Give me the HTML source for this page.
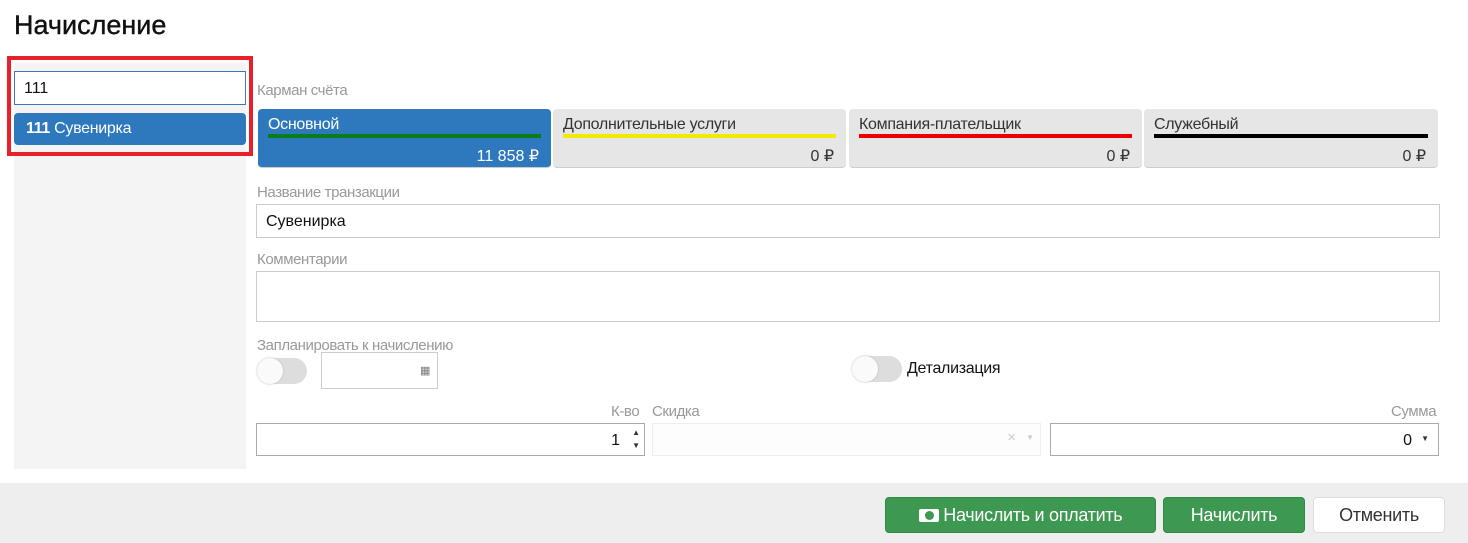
<!DOCTYPE html><html><head><meta charset="utf-8"><style>
*{box-sizing:border-box;margin:0;padding:0}
body{width:1468px;height:543px;background:#fff;font-family:"Liberation Sans",sans-serif;position:relative;overflow:hidden;color:#111}
.a{position:absolute}
.lbl{position:absolute;color:#999;font-size:15px;letter-spacing:-0.4px}
.inp{position:absolute;border:1px solid #ccc;background:#fff}
.tab{position:absolute;top:109px;height:59px;width:293px;background:#e6e6e6;border-radius:4px;border-bottom:1px solid #ccc}
.tab .t{position:absolute;left:10px;top:7px;font-size:16px;color:#333;letter-spacing:-0.3px}
.tab .l{position:absolute;left:10px;right:10px;top:25px;height:4px}
.tab .v{position:absolute;right:12px;top:37px;font-size:16px;color:#333}
.tog{position:absolute;width:50px;height:26px;border-radius:13px;background:#ddd}
.tog:after{content:"";position:absolute;left:0;top:0;width:26px;height:26px;border-radius:50%;background:#fafafa;box-shadow:0 0 2px #bbb}
.btn{position:absolute;top:497px;height:36px;border-radius:4px;font-size:18px;text-align:center;line-height:34px;letter-spacing:-0.3px}
</style></head><body>
<div class="a" style="left:14px;top:10px;font-size:27px;color:#111;-webkit-text-stroke:0.4px #111">Начисление</div>
<div class="a" style="left:14px;top:63px;width:232px;height:406px;background:#f4f4f4"></div>
<div class="a" style="left:7px;top:56px;width:246px;height:100px;border:4px solid #e8202a"></div>
<div class="inp" style="left:14px;top:71px;width:232px;height:34px;border-color:#3a7ab8;font-size:16px;padding:8px 9px">111</div>
<div class="a" style="left:14px;top:113px;width:232px;height:32px;background:#2e78bd;border-radius:4px;color:#fff;font-size:16px;padding:7px 12px;letter-spacing:-0.3px"><b>111</b> Сувенирка</div>
<div class="lbl" style="left:257px;top:82px">Карман счёта</div>
<div class="tab" style="left:258px;background:#2e78bd"><div class="t" style="color:#fff">Основной</div><div class="l" style="background:#0a7d1a"></div><div class="v" style="color:#fff">11 858 ₽</div></div>
<div class="tab" style="left:553px"><div class="t">Дополнительные услуги</div><div class="l" style="background:#f2ea00"></div><div class="v">0 ₽</div></div>
<div class="tab" style="left:849px"><div class="t">Компания-плательщик</div><div class="l" style="background:#e00"></div><div class="v">0 ₽</div></div>
<div class="tab" style="left:1144px;width:294px"><div class="t">Служебный</div><div class="l" style="background:#000"></div><div class="v">0 ₽</div></div>
<div class="lbl" style="left:257px;top:184px">Название транзакции</div>
<div class="inp" style="left:256px;top:204px;width:1184px;height:34px;font-size:16px;padding:8px 9px">Сувенирка</div>
<div class="lbl" style="left:257px;top:251px">Комментарии</div>
<div class="inp" style="left:256px;top:271px;width:1184px;height:51px"></div>
<div class="lbl" style="left:257px;top:337px">Запланировать к начислению</div>
<div class="tog" style="left:257px;top:358px"></div>
<div class="inp" style="left:321px;top:352px;width:117px;height:37px"><span class="a" style="left:98px;top:11px;font-size:11px;color:#777">▦</span></div>
<div class="tog" style="left:852px;top:356px"></div>
<div class="a" style="left:907px;top:360px;font-size:16px;letter-spacing:-0.3px">Детализация</div>
<div class="lbl" style="left:611px;top:403px">К-во</div>
<div class="lbl" style="left:652px;top:403px">Скидка</div>
<div class="lbl" style="left:1391px;top:403px">Сумма</div>
<div class="inp" style="left:256px;top:423px;width:389px;height:33px;border-color:#aaa;font-size:16px;text-align:right;padding:8px 24px">1<span class="a" style="right:4px;top:2px;font-size:8px;line-height:13px;color:#333">▲<br>▼</span></div>
<div class="inp" style="left:652px;top:423px;width:389px;height:33px;border-color:#eee;background:#fdfdfd"><span class="a" style="right:24px;top:5px;color:#ccc;font-size:15px">×</span><span class="a" style="right:6px;top:9px;color:#ccc;font-size:8px">▼</span></div>
<div class="inp" style="left:1050px;top:423px;width:389px;height:33px;border-color:#aaa;font-size:16px;text-align:right;padding:8px 26px">0<span class="a" style="right:9px;top:10px;font-size:8px;color:#333">▼</span></div>
<div class="a" style="left:0;top:483px;width:1468px;height:60px;background:#eee"></div>
<div class="btn" style="left:885px;width:271px;background:#3d9951;border:1px solid #2f8a43;color:#fff"><span style="display:inline-block;width:20px;height:13px;background:#fff;border-radius:2px;vertical-align:-1px;position:relative"><span style="position:absolute;left:6px;top:2px;width:9px;height:9px;border-radius:50%;background:#3d9951"></span></span> Начислить и оплатить</div>
<div class="btn" style="left:1163px;width:142px;background:#3d9951;border:1px solid #2f8a43;color:#fff">Начислить</div>
<div class="btn" style="left:1313px;width:132px;background:#fff;border:1px solid #ddd;color:#333">Отменить</div>
</body></html>
